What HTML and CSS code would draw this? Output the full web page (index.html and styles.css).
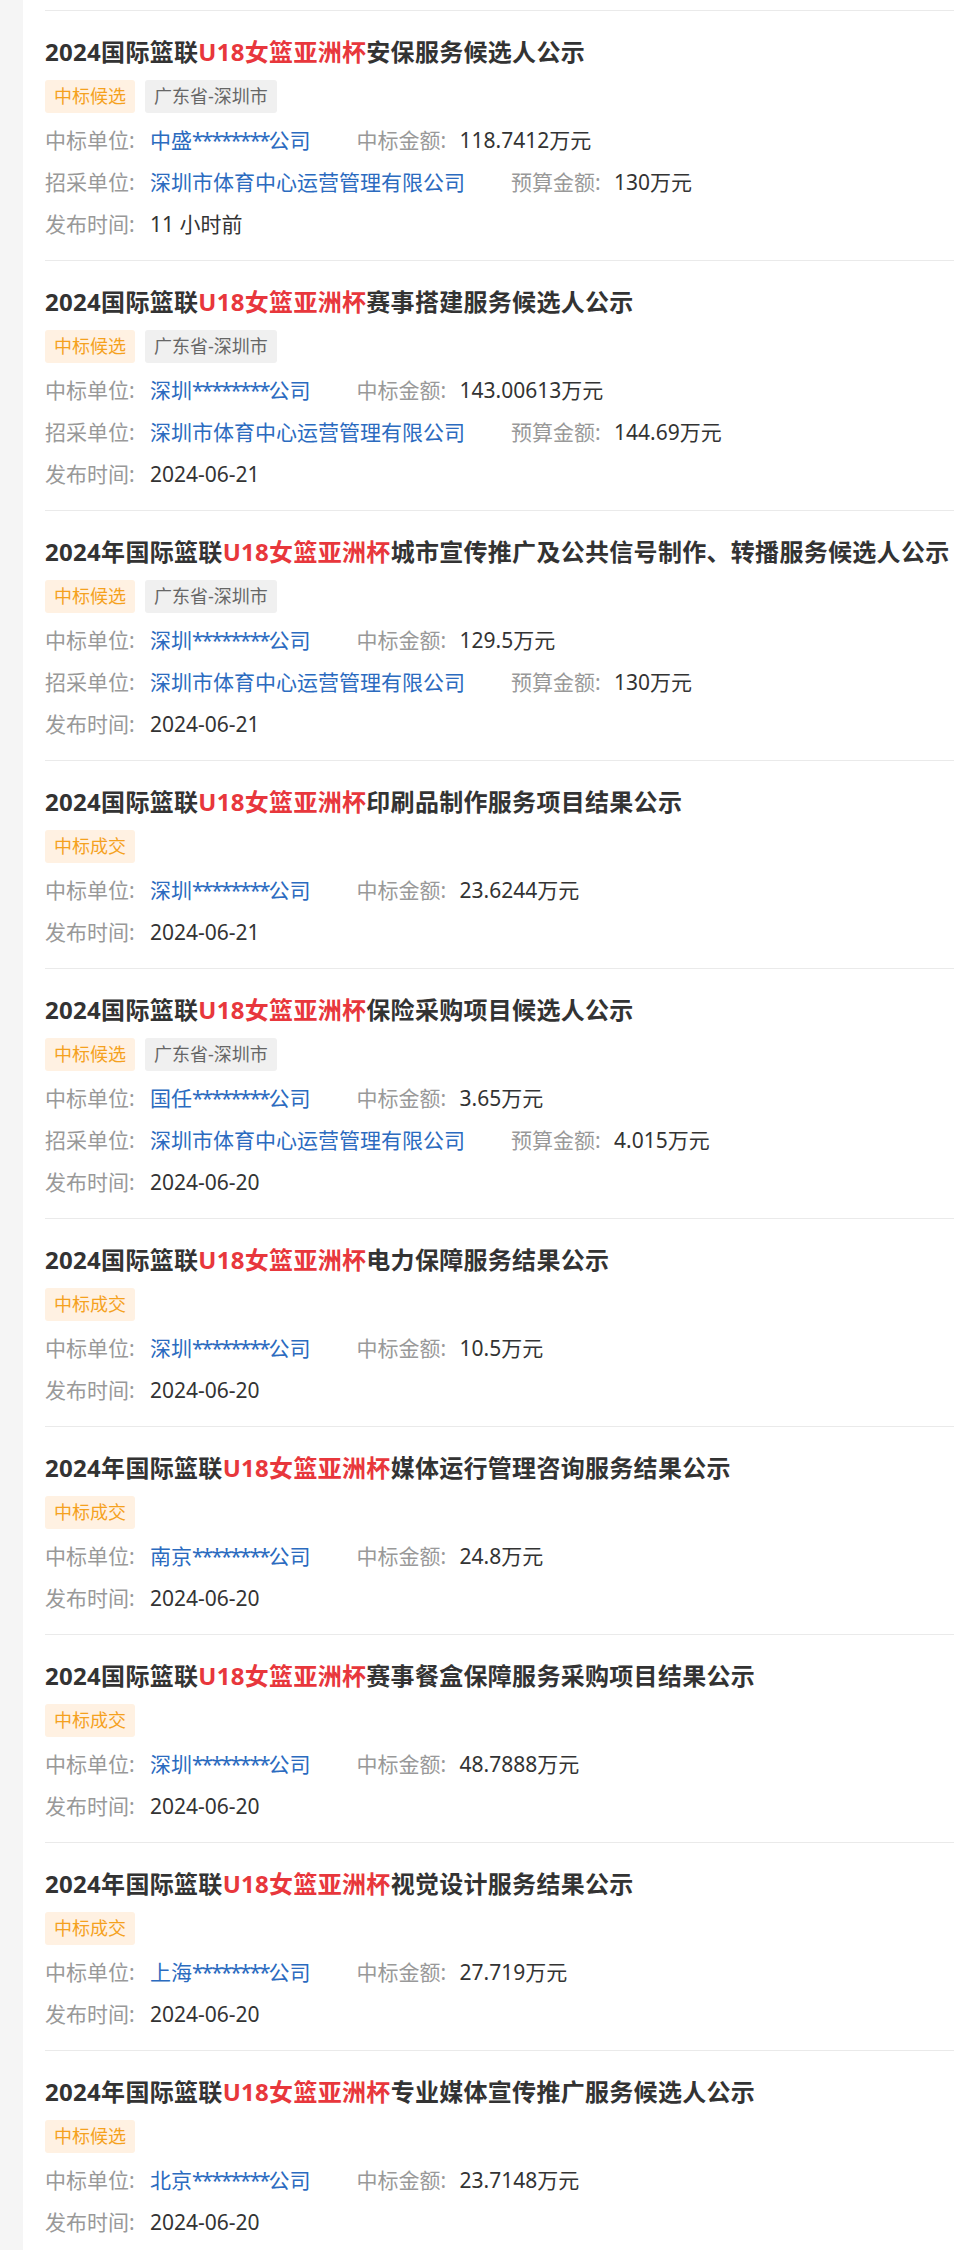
FILE: index.html
```html
<!DOCTYPE html>
<html lang="zh-CN">
<head>
  <meta charset="UTF-8">
  <meta name="viewport" content="width=device-width, initial-scale=1.0">
  <title>U18女篮亚洲杯 招标公告</title>
  <link rel="stylesheet" href="styles.css">
</head>
<body>
  <div class="page">
    <ul class="list">
      <li class="item">
        <h3 class="title">2024国际篮联<em>U18女篮亚洲杯</em>安保服务候选人公示</h3>
        <div class="tags"><span class="tag tag-orange">中标候选</span><span class="tag tag-gray">广东省-深圳市</span></div>
        <div class="row"><span class="label">中标单位:</span><a class="link">中盛<span class="mask">********</span>公司</a><span class="label gap">中标金额:</span><span class="value">118.7412万元</span></div>
        <div class="row"><span class="label">招采单位:</span><a class="link">深圳市体育中心运营管理有限公司</a><span class="label gap">预算金额:</span><span class="value">130万元</span></div>
        <div class="row"><span class="label">发布时间:</span><span class="value">11 小时前</span></div>
      </li>
      <li class="item">
        <h3 class="title">2024国际篮联<em>U18女篮亚洲杯</em>赛事搭建服务候选人公示</h3>
        <div class="tags"><span class="tag tag-orange">中标候选</span><span class="tag tag-gray">广东省-深圳市</span></div>
        <div class="row"><span class="label">中标单位:</span><a class="link">深圳<span class="mask">********</span>公司</a><span class="label gap">中标金额:</span><span class="value">143.00613万元</span></div>
        <div class="row"><span class="label">招采单位:</span><a class="link">深圳市体育中心运营管理有限公司</a><span class="label gap">预算金额:</span><span class="value">144.69万元</span></div>
        <div class="row"><span class="label">发布时间:</span><span class="value">2024-06-21</span></div>
      </li>
      <li class="item">
        <h3 class="title">2024年国际篮联<em>U18女篮亚洲杯</em>城市宣传推广及公共信号制作、转播服务候选人公示</h3>
        <div class="tags"><span class="tag tag-orange">中标候选</span><span class="tag tag-gray">广东省-深圳市</span></div>
        <div class="row"><span class="label">中标单位:</span><a class="link">深圳<span class="mask">********</span>公司</a><span class="label gap">中标金额:</span><span class="value">129.5万元</span></div>
        <div class="row"><span class="label">招采单位:</span><a class="link">深圳市体育中心运营管理有限公司</a><span class="label gap">预算金额:</span><span class="value">130万元</span></div>
        <div class="row"><span class="label">发布时间:</span><span class="value">2024-06-21</span></div>
      </li>
      <li class="item">
        <h3 class="title">2024国际篮联<em>U18女篮亚洲杯</em>印刷品制作服务项目结果公示</h3>
        <div class="tags"><span class="tag tag-orange">中标成交</span></div>
        <div class="row"><span class="label">中标单位:</span><a class="link">深圳<span class="mask">********</span>公司</a><span class="label gap">中标金额:</span><span class="value">23.6244万元</span></div>
        <div class="row"><span class="label">发布时间:</span><span class="value">2024-06-21</span></div>
      </li>
      <li class="item">
        <h3 class="title">2024国际篮联<em>U18女篮亚洲杯</em>保险采购项目候选人公示</h3>
        <div class="tags"><span class="tag tag-orange">中标候选</span><span class="tag tag-gray">广东省-深圳市</span></div>
        <div class="row"><span class="label">中标单位:</span><a class="link">国任<span class="mask">********</span>公司</a><span class="label gap">中标金额:</span><span class="value">3.65万元</span></div>
        <div class="row"><span class="label">招采单位:</span><a class="link">深圳市体育中心运营管理有限公司</a><span class="label gap">预算金额:</span><span class="value">4.015万元</span></div>
        <div class="row"><span class="label">发布时间:</span><span class="value">2024-06-20</span></div>
      </li>
      <li class="item">
        <h3 class="title">2024国际篮联<em>U18女篮亚洲杯</em>电力保障服务结果公示</h3>
        <div class="tags"><span class="tag tag-orange">中标成交</span></div>
        <div class="row"><span class="label">中标单位:</span><a class="link">深圳<span class="mask">********</span>公司</a><span class="label gap">中标金额:</span><span class="value">10.5万元</span></div>
        <div class="row"><span class="label">发布时间:</span><span class="value">2024-06-20</span></div>
      </li>
      <li class="item">
        <h3 class="title">2024年国际篮联<em>U18女篮亚洲杯</em>媒体运行管理咨询服务结果公示</h3>
        <div class="tags"><span class="tag tag-orange">中标成交</span></div>
        <div class="row"><span class="label">中标单位:</span><a class="link">南京<span class="mask">********</span>公司</a><span class="label gap">中标金额:</span><span class="value">24.8万元</span></div>
        <div class="row"><span class="label">发布时间:</span><span class="value">2024-06-20</span></div>
      </li>
      <li class="item">
        <h3 class="title">2024国际篮联<em>U18女篮亚洲杯</em>赛事餐盒保障服务采购项目结果公示</h3>
        <div class="tags"><span class="tag tag-orange">中标成交</span></div>
        <div class="row"><span class="label">中标单位:</span><a class="link">深圳<span class="mask">********</span>公司</a><span class="label gap">中标金额:</span><span class="value">48.7888万元</span></div>
        <div class="row"><span class="label">发布时间:</span><span class="value">2024-06-20</span></div>
      </li>
      <li class="item">
        <h3 class="title">2024年国际篮联<em>U18女篮亚洲杯</em>视觉设计服务结果公示</h3>
        <div class="tags"><span class="tag tag-orange">中标成交</span></div>
        <div class="row"><span class="label">中标单位:</span><a class="link">上海<span class="mask">********</span>公司</a><span class="label gap">中标金额:</span><span class="value">27.719万元</span></div>
        <div class="row"><span class="label">发布时间:</span><span class="value">2024-06-20</span></div>
      </li>
      <li class="item">
        <h3 class="title">2024年国际篮联<em>U18女篮亚洲杯</em>专业媒体宣传推广服务候选人公示</h3>
        <div class="tags"><span class="tag tag-orange">中标候选</span></div>
        <div class="row"><span class="label">中标单位:</span><a class="link">北京<span class="mask">********</span>公司</a><span class="label gap">中标金额:</span><span class="value">23.7148万元</span></div>
        <div class="row"><span class="label">发布时间:</span><span class="value">2024-06-20</span></div>
      </li>
    </ul>
  </div>
</body>
</html>
```

FILE: styles.css
```css
body {
  margin: 0;
  padding: 0;
  background: #f5f5f5;
  font-family: 'Noto Sans', 'Noto Sans CJK SC', sans-serif;
  color: #333;
}
.page {
  margin-left: 23px;
  min-height: 100vh;
  background: #fff;
  padding: 10px 0 0 22px;
  box-sizing: border-box;
}
.list {
  list-style: none;
  margin: 0;
  padding: 0;
  border-top: 1px solid #eaeaea;
}
.item {
  padding: 23px 0 15px;
  border-bottom: 1px solid #eaeaea;
}
.title {
  margin: 0;
  font-size: 24px;
  line-height: 36px;
  font-weight: bold;
  letter-spacing: 0.3px;
  color: #333;
  white-space: nowrap;
}
.title em {
  font-style: normal;
  color: #e8373c;
}
.tags {
  display: flex;
  gap: 10px;
  margin-top: 10px;
  margin-bottom: 6px;
}
.tag {
  height: 33px;
  line-height: 33px;
  padding: 0 9px;
  font-size: 18px;
  border-radius: 3px;
}
.tag-orange {
  background: #fff1e2;
  color: #f5a11e;
}
.tag-gray {
  background: #f0f0f0;
  color: #666;
}
.row {
  font-size: 21px;
  line-height: 42px;
  white-space: nowrap;
}
.label {
  display: inline-block;
  width: 105px;
  color: #999;
}
.label.gap {
  width: 103px;
  margin-left: 46px;
}
.link {
  color: #2b6bbf;
  text-decoration: none;
}
/* 遮罩星号比较窄 */
.link .mask {
  letter-spacing: -2px;
}
.value {
  color: #333;
}
```
